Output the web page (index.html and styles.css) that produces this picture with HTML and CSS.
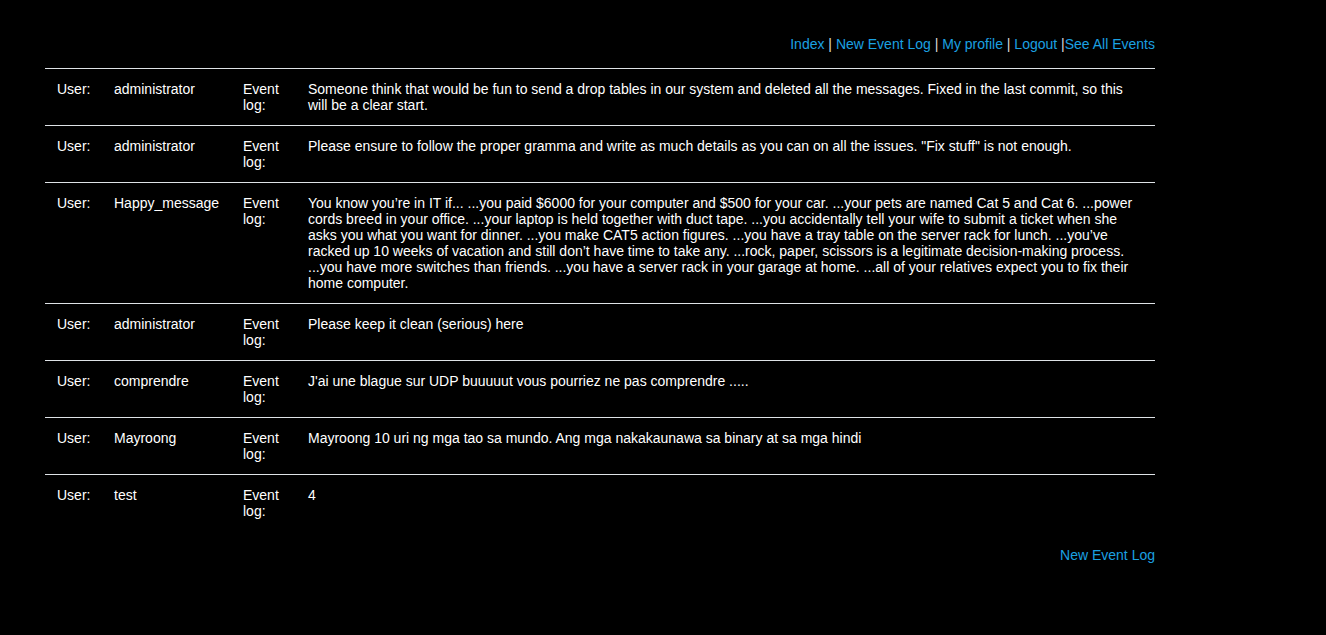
FILE: index.html
```html
<!DOCTYPE html>
<html>
<head>
<meta charset="utf-8">
<link rel="stylesheet" href="styles.css">
</head>
<body>
<div class="page">
  <nav class="nav">
    <a href="#">Index</a> | <a href="#">New Event Log</a> | <a href="#">My profile</a> | <a href="#">Logout</a> |<a href="#">See All Events</a>
  </nav>
  <table class="log">
    <colgroup>
      <col class="c-label">
      <col class="c-user">
      <col class="c-elabel">
      <col class="c-msg">
    </colgroup>
    <tbody>
      <tr><td>User:</td><td>administrator</td><td>Event log:</td><td>Someone think that would be fun to send a drop tables in our system and deleted all the messages. Fixed in the last commit, so this will be a clear start.</td></tr>
      <tr><td>User:</td><td>administrator</td><td>Event log:</td><td>Please ensure to follow the proper gramma and write as much details as you can on all the issues. "Fix stuff" is not enough.</td></tr>
      <tr><td>User:</td><td>Happy_message</td><td>Event log:</td><td>You know you’re in IT if... ...you paid $6000 for your computer and $500 for your car. ...your pets are named Cat 5 and Cat 6. ...power cords breed in your office. ...your laptop is held together with duct tape. ...you accidentally tell your wife to submit a ticket when she asks you what you want for dinner. ...you make CAT5 action figures. ...you have a tray table on the server rack for lunch. ...you’ve racked up 10 weeks of vacation and still don’t have time to take any. ...rock, paper, scissors is a legitimate decision-making process. ...you have more switches than friends. ...you have a server rack in your garage at home. ...all of your relatives expect you to fix their home computer.</td></tr>
      <tr><td>User:</td><td>administrator</td><td>Event log:</td><td>Please keep it clean (serious) here</td></tr>
      <tr><td>User:</td><td>comprendre</td><td>Event log:</td><td>J'ai une blague sur UDP buuuuut vous pourriez ne pas comprendre .....</td></tr>
      <tr><td>User:</td><td>Mayroong</td><td>Event log:</td><td>Mayroong 10 uri ng mga tao sa mundo. Ang mga nakakaunawa sa binary at sa mga hindi</td></tr>
      <tr><td>User:</td><td>test</td><td>Event log:</td><td>4</td></tr>
    </tbody>
  </table>
  <div class="footer-link"><a href="#">New Event Log</a></div>
</div>
</body>
</html>
```
FILE: styles.css
```css
html, body {
  margin: 0;
  padding: 0;
  background: #000;
}
body {
  font-family: "Liberation Sans", Arial, sans-serif;
  font-size: 14px;
  line-height: 16px;
  color: #fff;
}
a {
  color: #1ba1e2;
  text-decoration: none;
}
.page {
  width: 1110px;
  margin-left: 45px;
  padding-top: 36px;
}
.nav {
  text-align: right;
  color: #ddd;
  margin-bottom: 16px;
}
.log {
  width: 100%;
  border-collapse: collapse;
  table-layout: fixed;
}
.c-label { width: 57px; }
.c-user { width: 129px; }
.c-elabel { width: 65px; }
.log td {
  padding: 12px;
  vertical-align: top;
  border-top: 1px solid #dee2e6;
}
.footer-link {
  text-align: right;
  margin-top: 16px;
}
```
